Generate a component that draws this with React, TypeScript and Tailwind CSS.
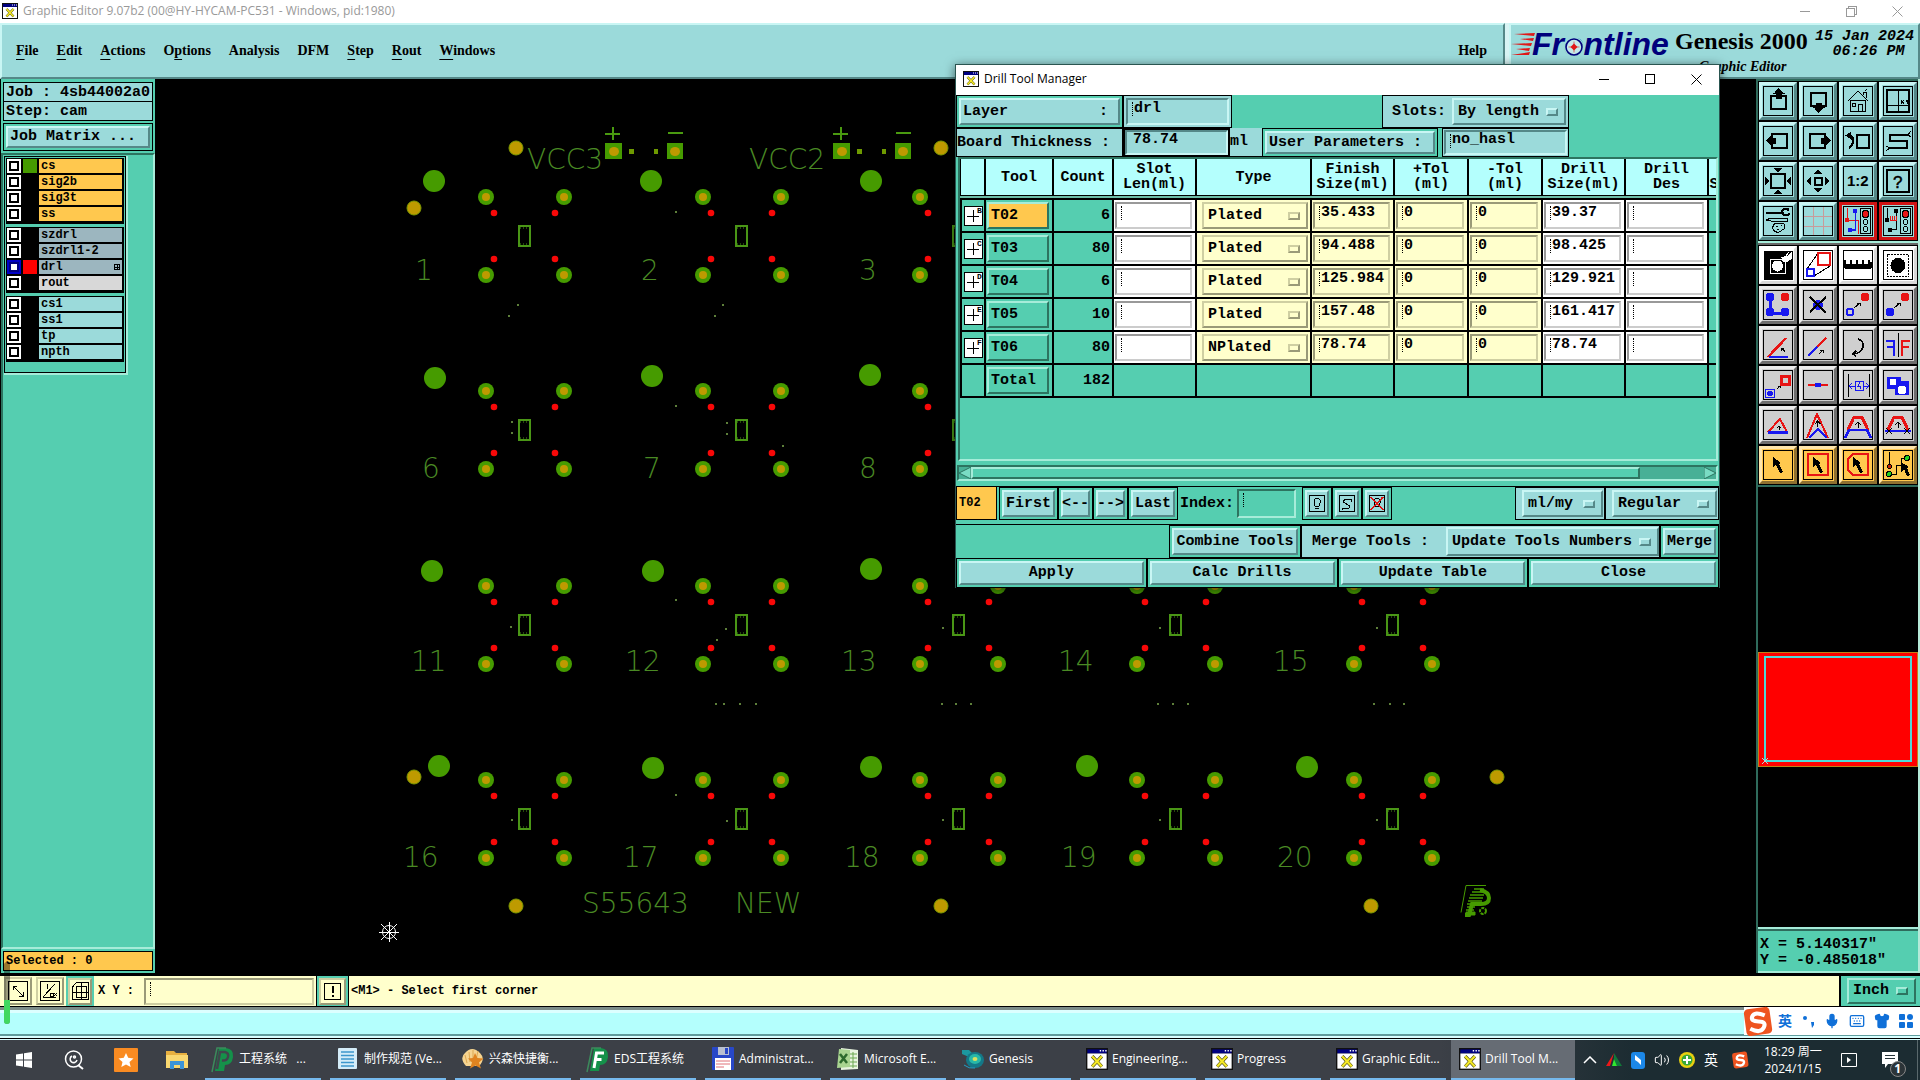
import React from 'react';
import { Mic, Keyboard, Shirt, Volume2 } from 'lucide-react';

const MONO = "font-['Liberation_Mono','Noto_Sans_CJK_SC',monospace] font-bold";
const SERIF = "font-['Liberation_Serif',serif]";
const UI = "font-['Open_Sans','Noto_Sans_CJK_SC',sans-serif]";

const RAISED = 'border-2 border-t-[#c9f6f4] border-l-[#c9f6f4] border-b-[#558888] border-r-[#558888]';
const SUNKEN = 'border-2 border-t-[#558888] border-l-[#558888] border-b-[#c9f6f4] border-r-[#c9f6f4]';
const RAISED_GREEN = 'border-2 border-t-[#a6ecd9] border-l-[#a6ecd9] border-b-[#2d7460] border-r-[#2d7460]';
const SUNKEN_GREEN = 'border-2 border-t-[#2d7460] border-l-[#2d7460] border-b-[#a6ecd9] border-r-[#a6ecd9]';
const RAISED_CREAM = 'border-2 border-t-[#cfcfa2] border-l-[#cfcfa2] border-b-[#9a9a78] border-r-[#9a9a78]';
const SUNKEN_CREAM = 'border-2 border-t-[#9a9a78] border-l-[#9a9a78] border-b-[#cfcfa2] border-r-[#cfcfa2]';
const SUNKEN_WHITE = 'border-2 border-t-[#999999] border-l-[#999999] border-b-[#cccccc] border-r-[#cccccc]';

/* ---------- small shared parts ---------- */

function XIcon({ size = 16 }: { size?: number }) {
  return (
    <svg width={size} height={size} viewBox="0 0 16 16" className="shrink-0">
      <rect x="0" y="0" width="16" height="16" fill="#111" />
      <rect x="1" y="1" width="14" height="3" fill="#000080" />
      <path d="M10 2h1M12 2h1M14 2h1" stroke="#fff" strokeWidth="1" />
      <rect x="1" y="4" width="14" height="11" fill="#fff" />
      <path d="M4.500 6l7 7.500M11.500 6l-7 7.500" stroke="#3c3c00" strokeWidth="2.400" />
      <path d="M4.500 6l7 7.500M11.500 6l-7 7.500" stroke="#f4e828" strokeWidth="1.700" />
    </svg>
  );
}

interface OptionMenuProps {
  label: string;
  value: string;
  className: string;
  mark: string;
}

function OptionMenu({ label, value, className, mark }: OptionMenuProps) {
  return (
    <span className={`relative flex items-center ${className}`}>
      <select aria-label={label} defaultValue={value} className="h-full w-full appearance-none bg-transparent pl-1 outline-none">
        <option>{value}</option>
      </select>
      <span className={`pointer-events-none absolute right-1.5 h-2 w-3 ${mark}`} />
    </span>
  );
}

interface FieldProps {
  label: string;
  value?: string;
  className: string;
  caret?: boolean;
}

function Field({ label, value = '', className, caret = true }: FieldProps) {
  return (
    <span className={`relative block ${className}`}>
      <input
        aria-label={label}
        defaultValue={value}
        className="block h-full w-full min-w-0 bg-transparent pb-1.5 pl-1.5 leading-4 outline-none"
      />
      {caret && <span className="pointer-events-none absolute left-1 top-0.5 h-3.5 border-l border-dotted border-black" />}
    </span>
  );
}

/* ---------- title and menu bars ---------- */

function WindowControls({ color, restore }: { color: string; restore?: boolean }) {
  return (
    <div className="flex">
      <button aria-label="Minimize" className="flex h-5 w-[46px] items-center justify-center">
        <svg width="11" height="11" shapeRendering="crispEdges"><path d="M0 5.500h10" stroke={color} /></svg>
      </button>
      <button aria-label="Maximize" className="flex h-5 w-[46px] items-center justify-center">
        <svg width="11" height="11" fill="none" stroke={color} shapeRendering="crispEdges">
          {restore ? <path d="M.5 2.500h8v8h-8zM2.500 2.500v-2h8v8h-2" /> : <path d="M.5.5h9v9h-9z" />}
        </svg>
      </button>
      <button aria-label="Close" className="flex h-5 w-[46px] items-center justify-center">
        <svg width="11" height="11" stroke={color}><path d="M.5.5l10 10M10.500.5l-10 10" /></svg>
      </button>
    </div>
  );
}

const menus = [
  ['', 'F', 'ile'],
  ['', 'E', 'dit'],
  ['', 'A', 'ctions'],
  ['O', 'p', 'tions'],
  ['Analysis', '', ''],
  ['DFM', '', ''],
  ['', 'S', 'tep'],
  ['', 'R', 'out'],
  ['', 'W', 'indows'],
];

function FrontlineLogo() {
  return (
    <svg width="164" height="40" viewBox="0 0 164 40" role="img" aria-label="Frontline">
      <g fill="#e01818">
        <path d="M3 9L24 8l-1 3zM9 14l14-1-1 3zM0 19l21-1-1 3zM5 24l14-1-1 3zM0 30l19-3-1 3z" />
      </g>
      <text x="21" y="30" fontSize="32" fontWeight="700" fontStyle="italic" fill="#00007c" fontFamily="Liberation Sans">
        Frontline
      </text>
      <circle cx="63" cy="22" r="10" fill="#9bdada" />
      <circle cx="63" cy="22" r="8" fill="#c4eaea" stroke="#00007c" strokeWidth="1.600" />
      <path d="M63 18.500l3.500 3.500-3.500 3.500-3.500-3.500z" fill="#e01818" />
      <path d="M63 16.500v11M57.500 22h11" stroke="#e01818" strokeWidth=".6" />
    </svg>
  );
}

function MenuBar() {
  return (
    <header className={`flex h-14 gap-1 bg-[#d8f4f4] ${SERIF}`}>
      <nav className={`flex flex-1 items-center justify-between bg-[#9bdada] pl-3.5 pr-4 text-sm font-bold ${RAISED} border-t-[#4f7f7f]`}>
        <div className="flex gap-[18px]">
          {menus.map(([pre, key, post]) => (
            <button key={pre + key + post}>
              {pre}
              <span className="underline underline-offset-4">{key}</span>
              {post}
            </button>
          ))}
        </div>
        <button>Help</button>
      </nav>
      <div className={`flex w-[411px] bg-[#9bdada] ${RAISED} border-t-[#4f7f7f]`}>
        <FrontlineLogo />
        <div className="flex-1 pt-1">
          <div className="text-2xl font-bold leading-6">Genesis 2000</div>
          <div className="pl-6 pt-1 text-sm font-bold italic leading-5">Graphic Editor</div>
        </div>
        <div className={`pr-1 pt-1 text-center text-[15px] italic leading-[15px] ${MONO}`}>
          <div>15 Jan 2024</div>
          <div className="pl-2">06:26 PM</div>
        </div>
      </div>
    </header>
  );
}

/* ---------- layer list ---------- */

interface Layer {
  name: string;
  color?: string;
  active?: boolean;
}

const layerGroups: { bg: string; layers: Layer[] }[] = [
  { bg: 'bg-[#ffc84e]', layers: [{ name: 'cs', color: 'bg-[#469b00]' }, { name: 'sig2b' }, { name: 'sig3t' }, { name: 'ss' }] },
  { bg: 'bg-[#9cb6bf]', layers: [{ name: 'szdrl' }, { name: 'szdrl1-2' }, { name: 'drl', color: 'bg-[#ff0000]', active: true }, { name: 'rout' }] },
  { bg: 'bg-[#9bdada]', layers: [{ name: 'cs1' }, { name: 'ss1' }, { name: 'tp' }, { name: 'npth' }] },
];

function LayerPanel() {
  return (
    <aside className={`flex w-[155px] shrink-0 flex-col border-l border-black bg-[#55ceb0] ${MONO}`}>
      <div className="flex flex-col gap-0.5 px-0.5 pt-[3px] text-[15px]">
        <div>
          <div className="h-5 border border-black bg-[#9bdada] pl-0.5 leading-5">Job : 4sb44002a0</div>
          <div className="h-[19px] border border-t-0 border-black bg-[#9bdada] pl-0.5 leading-5">Step: cam</div>
        </div>
        <div className="border border-black p-0.5">
          <button className={`block h-[22px] w-full bg-[#9bdada] pl-0.5 text-left leading-[18px] ${RAISED}`}>Job Matrix ...</button>
        </div>
      </div>
      <div className={`mt-0.5 flex-1 pl-px pt-px ${SUNKEN_GREEN}`}>
        <div className="w-[124px] border-b-2 border-r-2 border-[#a6ecd9]">
          <div className="flex flex-col gap-[3px] border border-black p-px pb-2.5 text-xs">
            {layerGroups.map((group) => (
              <div key={group.bg} className="flex flex-col gap-0.5 bg-black p-px pr-0.5 pb-[3px]">
                {group.layers.map((layer) => (
                  <div key={layer.name} className="flex h-3.5 gap-0.5">
                    <label className={`flex w-3.5 items-center justify-center ${layer.active ? 'bg-[#0000c8]' : 'bg-white'}`}>
                      <input
                        type="checkbox"
                        aria-label={layer.name}
                        className={`size-2.5 appearance-none border-2 bg-white ${layer.active ? 'border-[#000080]' : 'border-black'}`}
                      />
                    </label>
                    <span className={`w-3.5 ${layer.color ?? 'bg-black'}`} />
                    <button
                      className={`flex flex-1 items-center justify-between pl-0.5 leading-3 ${layer.name === 'rout' ? 'bg-[#d8d8d8]' : group.bg}`}
                    >
                      {layer.name}
                      {layer.active && (
                        <svg width="6" height="6" fill="none" stroke="#000" className="mr-0.5" shapeRendering="crispEdges">
                          <path d="M.5.5h5v5h-5zM3 0v6M0 3h6" />
                        </svg>
                      )}
                    </button>
                  </div>
                ))}
              </div>
            ))}
          </div>
        </div>
      </div>
      <div className="mx-0.5 my-0.5 h-5 border border-black bg-[#ffc84e] pl-0.5 text-xs leading-[18px]">Selected : 0</div>
    </aside>
  );
}

/* ---------- board drawing ---------- */

const colX = [486, 703, 920, 1137, 1354];
const rowY = [197, 391, 586, 780];

const fiducials = [
  [434, 181], [651, 181], [871, 181],
  [435, 378], [652, 376], [870, 375],
  [432, 571], [653, 571], [871, 569],
  [439, 766], [653, 768], [871, 767], [1087, 766], [1307, 767],
];

const drills = [
  [516, 148], [414, 208], [941, 148], [414, 777],
  [516, 906], [941, 906], [1371, 906], [1497, 777],
];

const labels: [string, number, number][] = [
  ['1', 415, 280], ['2', 641, 280], ['3', 859, 280],
  ['6', 422, 478], ['7', 643, 478], ['8', 859, 478],
  ['11', 411, 671], ['12', 625, 671], ['13', 841, 671], ['14', 1058, 671], ['15', 1273, 671],
  ['16', 403, 867], ['17', 623, 867], ['18', 844, 867], ['19', 1061, 867], ['20', 1277, 867],
  ['VCC3', 527, 169], ['VCC2', 749, 169], ['S55643', 582, 913], ['NEW', 735, 913],
];

const dots = [
  [518, 305], [509, 316], [723, 305], [715, 316], [676, 212], [676, 406],
  [512, 422], [512, 433], [727, 423], [727, 434], [783, 446], [676, 600],
  [511, 627], [726, 629], [943, 628], [1160, 628], [1377, 628], [717, 640],
  [512, 820], [727, 821], [943, 820], [1160, 820], [1377, 820], [676, 795],
  [716, 704], [724, 704], [740, 704], [756, 704], [942, 704], [956, 704], [971, 704],
  [1158, 704], [1173, 704], [1188, 704], [1374, 704], [1390, 704], [1404, 704],
];

function Connector({ x }: { x: number }) {
  return (
    <g>
      <path d={`M${x - 9} 134h15M${x - 1} 127v13M${x + 54} 133h15`} stroke="#4a9a10" strokeWidth="2" />
      <rect x={x - 9} y="143" width="17" height="16" fill="#469b00" />
      <rect x={x + 53} y="143" width="16" height="16" fill="#469b00" />
      <ellipse cx={x} cy="151.500" rx="5" ry="4.500" fill="#be9a00" />
      <ellipse cx={x + 61} cy="151.500" rx="5" ry="4.500" fill="#be9a00" />
      <rect x={x + 15} y="149" width="5" height="5" fill="#6e9a00" />
      <rect x={x + 40} y="149" width="4" height="5" fill="#6e9a00" />
    </g>
  );
}

function BoardView() {
  return (
    <main className="relative min-w-0 flex-1 overflow-hidden bg-black">
      <svg viewBox="155 79 1601 894" preserveAspectRatio="xMinYMin slice" className="absolute inset-0 h-full w-full">
        {rowY.map((y) =>
          colX.map((x) => (
            <g key={`${x}-${y}`}>
              {[[0, 0], [78, 0], [0, 78], [78, 78]].map(([dx, dy]) => (
                <g key={`${dx}-${dy}`}>
                  <circle cx={x + dx} cy={y + dy} r="8" fill="#469b00" />
                  <circle cx={x + dx} cy={y + dy} r="4" fill="#be9a00" />
                </g>
              ))}
              {[[8, 16], [69, 16], [8, 62], [69, 62]].map(([dx, dy]) => (
                <circle key={`${dx}-${dy}`} cx={x + dx} cy={y + dy} r="3.300" fill="#f80808" />
              ))}
              <rect x={x + 33} y={y + 29} width="11" height="20" fill="none" stroke="#4a9616" strokeWidth="2" />
              <path d={`M${x + 34} ${y + 31}h9M${x + 34} ${y + 47}h9`} stroke="#4a9616" strokeDasharray="1 2" />
            </g>
          ))
        )}
        {fiducials.map(([x, y]) => (
          <circle key={`${x}-${y}`} cx={x} cy={y} r="11" fill="#469b00" />
        ))}
        {drills.map(([x, y]) => (
          <circle key={`${x}-${y}`} cx={x} cy={y} r="7" fill="#be9a00" stroke="#7c9a00" strokeWidth="1" />
        ))}
        <Connector x={614} />
        <Connector x={842} />
        {labels.map(([text, x, y]) => (
          <text key={text} x={x} y={y} fontSize="28" fontWeight="200" fontFamily="'DejaVu Sans Light', 'DejaVu Sans', sans-serif" fill="#4a8a24">
            {text}
          </text>
        ))}
        {dots.map(([x, y]) => (
          <rect key={`${x}-${y}`} x={x - 1} y={y - 1} width="2" height="2" fill="#5d7f3a" />
        ))}
        {/* origin marker */}
        <g stroke="#fff" fill="none">
          <circle cx="389" cy="932" r="6.500" />
          <path d="M379 932.500h20M389.500 922v20M381 924l16 16M397 924l-16 16" />
        </g>
        {/* maker's mark */}
        <g fill="none" stroke="#469b00">
          <path d="M1486 885.500h-20l-5 27" />
          <path d="M1474 889h10M1472 892h14M1470 895h14M1469 898h14M1468 901h14M1467 904h10M1467 907h8M1466 910h8" strokeWidth="1.600" />
          <path d="M1480 890q9 2 9 8t-8 6h-9l-3 11h-4" strokeWidth="4" />
          <path d="M1466 912h9v3h-9z" fill="#469b00" />
          <circle cx="1483" cy="911" r="3" strokeDasharray="3 1" strokeWidth="2" />
        </g>
      </svg>
    </main>
  );
}

/* ---------- right tool box ---------- */

const R = '#e81414';
const B = '#1818f0';

const viewTools: [string, React.ReactNode][] = [
  ['Pan up', <g><path d="M8 9.500h15v13H8z" fill="none" strokeWidth="2" /><path d="M15.500 2l4 4v1h2v1h-3v5h-6V8h-3V7h2V6z" fill="#000" stroke="none" /></g>],
  ['Pan down', <g><path d="M8 7h15v13H8z" fill="none" strokeWidth="2" /><path d="M15.500 27l-4-4v-1h-2v-1h3v-4h6v4h3v1h-2v1z" fill="#000" stroke="none" /></g>],
  ['Home', <g fill="none"><path d="M7.500 14.500h15v11h-15zM5 15l10-10 10 10M9.500 17.500h3v3h-3zM15.500 25v-7h4v7M20.500 9V6h3v6M22 5l2-2" /></g>],
  ['Window XY', <g fill="none"><path d="M4 4h22v22H4z" strokeWidth="2" /><path d="M15.500 4v22M4 19.500h22" /><path d="M18 14l3 4M21 14l-3 4M23 14l1 2 1-2M24 16v2" /></g>],
  ['Pan left', <g><path d="M9 8h15v14H9z" fill="none" strokeWidth="2" /><path d="M2.500 14.500l5-5v2h5v6h-5v2z" fill="#000" stroke="none" /></g>],
  ['Pan right', <g><path d="M7 8h15v14H7z" fill="none" strokeWidth="2" /><path d="M27.500 14.500l-5-5v2h-5v6h5v2z" fill="#000" stroke="none" /></g>],
  ['Previous view', <g fill="none"><path d="M14 9h12v13H14z" strokeWidth="2" /><path d="M5 9h2q3 2 3 6t-4 7" strokeWidth="2.500" /><path d="M2 9.500l6-4v8z" fill="#000" stroke="none" /></g>],
  ['Serpent', <g fill="none"><path d="M25 9H7v6h17v7H7" strokeWidth="2" /><path d="M25 9l3-4M25 9l3 2M7 22l-4 3M7 22l-4-2" /></g>],
  ['Zoom in', <g><path d="M8 8h14v14H8z" fill="none" strokeWidth="2" /><path d="M10 2h10l-5 4zM10 28h10l-5-4zM2 10v10l4-5zM28 10v10l-4-5z" fill="#000" stroke="none" /></g>],
  ['Zoom out', <g><path d="M11.500 11.500h7v7h-7z" fill="none" strokeWidth="2" /><path d="M10 8h10l-5-4zM10 22h10l-5 4zM8 10v10l-4-5zM22 10v10l4-5z" fill="#000" stroke="none" /></g>],
  ['Scale 1:2', <text x="4" y="20" fontSize="15" fontWeight="700" fontFamily="Liberation Sans" stroke="none">1:2</text>],
  ['Query', <g><path d="M4 4h22v22H4z" fill="none" strokeWidth="2" /><text x="10" y="22" fontSize="17" fontFamily="Liberation Sans" strokeWidth=".5">?</text></g>],
  ['Settings', <g fill="none"><path d="M3 6.500h17" strokeWidth="2" /><path d="M26 4q-6-3-7 2 1 5 8 2" strokeWidth="2.500" /><path d="M3 14l5-2h16v3H8z" /><path d="M13 17q-4 2-3 6 2 4 6 3l5-3q2-4-1-6zM13 20h2M18 19h1M14 23h2" /></g>],
  ['Grid', <path d="M10.500 1v28M20.500 1v28M1 10.500h28M1 20.500h28" stroke="#c99a9a" />],
];

const trafficTools: [string, React.ReactNode][] = [
  ['Net check', <g fill="none"><path d="M4.500 2v12M3 14h12v14" stroke={R} /><path d="M12.500 3v21H6" stroke={B} strokeWidth="1.500" /><circle cx="4" cy="14" r="2.500" fill={R} stroke="none" /><circle cx="12" cy="5" r="2.500" fill={B} stroke="none" /><circle cx="7" cy="24" r="2.500" fill={B} stroke="none" /></g>],
  ['Short check', <g fill="none"><path d="M4.500 2v12M13.500 4v19H7" /><path d="M7 10v4h6v-4M9 10v4M11 10v4" stroke={R} /><circle cx="4" cy="14" r="2" fill="#000" /><circle cx="13" cy="5" r="2" fill="#000" /><circle cx="7" cy="24" r="2" fill="#000" /></g>],
];

const whiteTools: [string, React.ReactNode][] = [
  ['Zoom', <g><path d="M1 1h28v28H1z" fill="#000" /><path d="M7 9h15v14H7zM20 10l6-8" fill="none" stroke="#fff" strokeWidth="1" /><circle cx="14.500" cy="16" r="5.500" fill="#fff" stroke="none" /><path d="M18 7l6-1 5-5v8l-5 3-4 0z" fill="#fff" stroke="none" /></g>],
  ['Resize', <g fill="none"><path d="M4 19L15 3M11 26l16-10" /><path d="M15 3h12v12H15z" stroke={R} strokeWidth="2" /><path d="M4 19h7v7H4z" stroke={B} strokeWidth="2" /></g>],
  ['Measure', <path d="M2 18h26M2 10v8M4 14v4M6 14v4M8 10v8M10 14v4M12 14v4M14 10v8M16 14v4M18 14v4M20 10v8M22 14v4M24 14v4M26 10v8M28 12v6" strokeWidth="1.500" />],
  ['Select feature', <g><path d="M4.500 4.500h21v22h-21z" fill="none" strokeDasharray="2 1" /><circle cx="15" cy="15.500" r="7" fill="#000" /></g>],
];

const editTools: [string, React.ReactNode][] = [
  ['Move', <g><path d="M7 7v16h15" fill="none" stroke={B} strokeWidth="3" /><circle cx="7" cy="7" r="4.500" fill={B} stroke="none" /><circle cx="7" cy="22" r="4.500" fill={B} stroke="none" /><circle cx="22" cy="22" r="4.500" fill={B} stroke="none" /><circle cx="22" cy="7" r="4.500" fill={R} stroke="none" /></g>],
  ['Delete', <g><circle cx="15" cy="15" r="5" fill={B} stroke="none" /><path d="M7 7l16 16M23 7L7 22" strokeWidth="2" /></g>],
  ['Copy', <g><circle cx="7" cy="22" r="3.500" fill="none" stroke={B} strokeWidth="2" /><circle cx="22" cy="7" r="4.500" fill={R} stroke="none" /><path d="M11 18l6-5M14 13h3v3" fill="none" /></g>],
  ['Move to', <g><circle cx="7" cy="22" r="4.500" fill={B} stroke="none" /><circle cx="22" cy="7" r="4.500" fill={R} stroke="none" /><path d="M11 18l6-5M14 13h3v3" fill="none" /></g>],
  ['Rotate line', <g fill="none"><path d="M5 27L23 8" stroke={R} strokeWidth="2.500" /><path d="M6 27h19" stroke={B} strokeWidth="2.500" /><path d="M22 22l-3-4M18 21v-3h3" /></g>],
  ['Stretch', <g fill="none"><path d="M14 17l9-9" stroke={R} strokeWidth="2.500" /><path d="M5 26l9-9" stroke={B} strokeWidth="2.500" /><path d="M16 24l4-4M17 20h3v3" /></g>],
  ['Rotate', <path d="M15 9q6 2 5 8-2 6-9 7M13 21l-3 3 3 2" fill="none" strokeWidth="1.500" />],
  ['Mirror', <g fill="none"><path d="M15.500 3v24" /><path d="M3 11h8v15M4 17h7" stroke={B} strokeWidth="2.500" /><path d="M27 11h-8v15M26 17h-7" stroke={R} strokeWidth="2.500" /></g>],
  ['Copy feature', <g fill="none"><path d="M18 6h8v8h-8z" stroke={R} strokeWidth="3" /><path d="M2.500 19.500h9v8h-9z" stroke={B} /><circle cx="7" cy="23.500" r="3" fill={B} stroke="none" /><path d="M14 19l3-3M15 16h2v2" /></g>],
  ['Join', <g><path d="M5 15h20" stroke={R} strokeWidth="2.500" /><path d="M12 15h6" stroke={B} strokeWidth="3.500" /></g>],
  ['Space', <g fill="none"><path d="M5.500 4v23M26.500 4v23" /><path d="M6 16h6M20 16h6M9 13l-3 3 3 3M23 13l3 3-3 3M12 11h8v9h-8zM17 12l-2 4h3l-1 3" stroke={B} /></g>],
  ['Merge shapes', <g><path d="M4 7h14v4h8v14H12v-6H4z" fill={B} stroke="none" /><circle cx="10" cy="12" r="3.500" fill="#fff" stroke="none" /><circle cx="19" cy="20" r="4.500" fill="#fff" stroke="none" /></g>],
  ['Chamfer', <g fill="none"><path d="M5 22L17 9l7 13" stroke={R} strokeWidth="2" /><path d="M5 22.500h20" stroke={B} strokeWidth="2.500" /><path d="M16 20v-4M14 18l2-2 2 2" /></g>],
  ['Peak', <g fill="none"><path d="M4 28L14 4l11 24" stroke={R} strokeWidth="2" /><path d="M6 28l9-9 9 9" stroke={B} strokeWidth="2" /><path d="M14.500 17v-6M12 14l2.500-3 3 3" /></g>],
  ['Offset', <g fill="none"><path d="M5 20L11 7h8l6 13" stroke={R} strokeWidth="3" /><path d="M2 28l4-8h18l4 8" stroke={B} strokeWidth="2.500" /><path d="M15 18v-6M12 15l3-3 3 3" /></g>],
  ['Trim', <g fill="none"><path d="M5 20L11 7h8l6 13" stroke={R} strokeWidth="3" /><path d="M2 21h26" stroke={B} strokeWidth="2.500" /><path d="M15 18v-6M12 15l3-3 3 3M3 18l6 6M9 18l-6 6M21 18l6 6M27 18l-6 6" /></g>],
];

const pointer = 'M10 7l8 6-2 1 4 8-3 1-4-8-3 2z';

const selectTools: [string, React.ReactNode][] = [
  ['Select', <path d={pointer} fill="#000" stroke="none" />],
  ['Select in box', <g><path d="M5 4h20v21H5z" fill="none" stroke={R} strokeWidth="2" /><path d={pointer} fill="#000" stroke="none" /></g>],
  ['Select in polygon', <g><path d="M10 4h15v21H10l-5-5V9z" fill="none" stroke={R} strokeWidth="2" /><path d={pointer} fill="#000" stroke="none" /></g>],
  ['Select net', <g fill="none"><path d="M6.500 2v14M6 24h7v-9h5V8h5" /><circle cx="6.500" cy="16.500" r="2" fill="#c02000" /><circle cx="24" cy="8" r="2.500" fill="#20d020" /><circle cx="6" cy="24" r="2.500" fill="#20d020" /><path d="M18 12l8 5-2 1 3 7-3 1-3-7-3 3z" fill="#000" stroke="none" /></g>],
];

interface ToolButtonProps {
  name: string;
  tone: string;
  framed?: boolean;
  children: React.ReactNode;
}

function ToolButton({ name, tone, framed = true, children }: ToolButtonProps) {
  return (
    <button aria-label={name} className={`flex size-[38px] items-center justify-center border-[3px] ${tone}`}>
      <svg width="30" height="30" viewBox="0 0 30 30" stroke="#000" shapeRendering="crispEdges">
        {framed && <rect x=".5" y=".5" width="29" height="29" fill="none" />}
        {children}
      </svg>
    </button>
  );
}

const TONE_AQUA = 'bg-[#9bdada] border-t-[#c9f6f4] border-l-[#c9f6f4] border-b-[#558888] border-r-[#558888]';
const TONE_RED = 'bg-[#9bdada] border-[#d01414]';
const TONE_WHITE = 'bg-white border-t-white border-l-white border-b-[#d8d8d8] border-r-[#d8d8d8]';
const TONE_GRAY = 'bg-[#cfcfcf] border-t-[#ececec] border-l-[#ececec] border-b-[#6e6e6e] border-r-[#6e6e6e]';
const TONE_AMBER = 'bg-[#ffc84e] border-t-[#ffe6ac] border-l-[#ffe6ac] border-b-[#8f7030] border-r-[#8f7030]';

function ToolPanel() {
  return (
    <aside className="flex w-[164px] shrink-0 flex-col border-l-2 border-r-2 border-l-[#2f6b5c] border-r-[#b5ead9] bg-black">
      <div className="border-t-2 border-[#2f6b5c] p-px">
        <div className="grid grid-cols-4 gap-0.5">
          {viewTools.map(([name, icon]) => (
            <ToolButton key={name} name={name} tone={TONE_AQUA}>{icon}</ToolButton>
          ))}
          {trafficTools.map(([name, icon]) => (
            <ToolButton key={name} name={name} tone={TONE_RED}>
              {icon}
              <path d="M17.500 2.500h10v25h-10z" fill="none" />
              <circle cx="22.500" cy="8" r="3.500" fill={R} />
              <circle cx="22.500" cy="16" r="2.500" fill="none" />
              <circle cx="22.500" cy="23" r="2.500" fill="none" />
            </ToolButton>
          ))}
        </div>
      </div>
      <div className="border-b-2 border-t-2 border-b-[#666] border-t-[#a6ecd9] bg-black" />
      <div className="p-px">
        <div className="grid grid-cols-4 gap-0.5">
          {whiteTools.map(([name, icon]) => (
            <ToolButton key={name} name={name} tone={TONE_WHITE} framed={name !== 'Zoom'}>{icon}</ToolButton>
          ))}
          {editTools.map(([name, icon]) => (
            <ToolButton key={name} name={name} tone={TONE_GRAY}>{icon}</ToolButton>
          ))}
          {selectTools.map(([name, icon]) => (
            <ToolButton key={name} name={name} tone={TONE_AMBER}>{icon}</ToolButton>
          ))}
        </div>
      </div>
      <div className="border-t-2 border-[#2f6b5c]" />
      <div className="flex flex-1 items-center pt-1.5">
        {/* overview map */}
        <svg viewBox="0 0 160 116" className="w-full">
          <rect x=".5" y=".5" width="159" height="114" fill="#ff0000" stroke="#c08018" />
          <rect x="7" y="5" width="146" height="104" fill="none" stroke="#50d8d8" strokeWidth="2" />
          <path d="M4 106l6 6M10 106l-6 6" stroke="#b0d8d8" />
        </svg>
      </div>
      <div className="border-b-2 border-t-2 border-[#a6ecd9] bg-[#55ceb0]">
        <div className={`border-t-2 border-[#2f6b5c] pb-0.5 pl-0.5 pt-1.5 text-[15px] leading-4 ${MONO}`}>
          <div>X = 5.140317"</div>
          <div>Y = -0.485018"</div>
        </div>
      </div>
    </aside>
  );
}

/* ---------- prompt line ---------- */

function PromptBar() {
  return (
    <section className={`flex h-[37px] shrink-0 border-b-[3px] border-t-[3px] border-b-[#7c8c88] border-t-black bg-[#ffffcc] text-xs ${MONO}`}>
      <div className="flex flex-1 items-center border-b border-black">
        <button aria-label="Snap" className={`ml-1 flex h-7 w-7 items-center justify-center ${RAISED_CREAM}`}>
          <svg width="20" height="20" fill="none" stroke="#000" shapeRendering="crispEdges"><path d="M.5.5h19v19H.5zM5 5l10 10M5 9V5h4M15 11v4h-4" /></svg>
        </button>
        <button aria-label="Angle" className={`ml-1 flex h-7 w-7 items-center justify-center ${RAISED_CREAM}`}>
          <svg width="20" height="20" fill="none" stroke="#000" shapeRendering="crispEdges"><path d="M.5.5h19v19H.5zM3 16L15 3M3 16h13M7 3v5M10 12h3v3h-3zM14 12l3 3M17 12l-3 3" /></svg>
        </button>
        <span className="ml-0.5 flex h-full items-center bg-[#55ceb0] px-0.5">
          <button aria-label="Grid" className={`flex h-[27px] w-6 items-center justify-center bg-[#ffffcc] ${RAISED_CREAM}`}>
            <svg width="17" height="18" fill="none" stroke="#000" shapeRendering="crispEdges"><path d="M.5 5l4-4.500h12v17H.5zM4 4h10v11H4zM9 1v16M1 10h15" /></svg>
          </button>
        </span>
        <label htmlFor="xy" className="w-[50px] pl-1">X Y :</label>
        <span className={`relative h-[27px] w-[170px] ${SUNKEN_CREAM}`}>
          <input id="xy" className="h-full w-full bg-transparent pl-1.5 outline-none" />
          <span className="pointer-events-none absolute left-1 top-0.5 h-3.5 border-l border-dotted border-black" />
        </span>
        <span className="ml-0.5 flex h-full items-center border-x border-black bg-[#55ceb0] px-0.5">
          <button aria-label="Options" className={`flex h-[27px] w-[27px] items-center justify-center bg-[#ffffcc] ${RAISED_CREAM}`}>
            <svg width="17" height="17" fill="none" stroke="#000" shapeRendering="crispEdges"><path d="M.5.5h16v16H.5z" /><path d="M8.500 3v7M8.500 12v2" strokeWidth="2" /></svg>
          </button>
        </span>
        <span className="pl-0.5">&lt;M1&gt; - Select first corner</span>
      </div>
      <div className="w-[81px] border-b border-l-2 border-black bg-[#55ceb0] py-0.5 pl-1.5 pr-1 text-[15px]">
        <OptionMenu label="Units" value="Inch" className={`h-full ${RAISED_GREEN}`} mark={`${RAISED_GREEN}`} />
      </div>
    </section>
  );
}

/* ---------- input method bar ---------- */

function SogouLogo({ size }: { size: number }) {
  return (
    <svg width={size} height={size} viewBox="0 0 30 30" className="shrink-0">
      <rect x="3" y="2" width="25" height="26" rx="4" fill="#ee5420" transform="rotate(-8 15 15)" />
      <path d="M22 9Q12 5 10 10t6 5 5 6-13 1" fill="none" stroke="#fff" strokeWidth="4" />
    </svg>
  );
}

function InputMethodBar() {
  return (
    <div className="absolute bottom-[5px] right-0 flex h-7 w-[176px] items-center gap-[9px] bg-white text-[#1070d8]">
      <span className="-ml-0.5">
        <SogouLogo size={31} />
      </span>
      <span className={`-ml-1 text-sm font-bold ${UI}`}>英</span>
      <svg width="14" height="14" className="shrink-0"><circle cx="4" cy="4" r="2" fill="#1070d8" /><path d="M10 8h3v3l-2 3" fill="#1070d8" /></svg>
      <Mic className="size-4 shrink-0" fill="#1070d8" />
      <Keyboard className="size-4 shrink-0" />
      <Shirt className="size-4 shrink-0" fill="#1070d8" />
      <svg width="14" height="14" className="shrink-0" fill="#1070d8"><rect width="6" height="6" rx="1" /><circle cx="11" cy="3" r="3" /><rect y="8" width="6" height="6" rx="1" /><rect x="8" y="8" width="6" height="6" rx="1" /></svg>
    </div>
  );
}

/* ---------- drill tool dialog ---------- */

interface DrillTool {
  id: string;
  symbol: string;
  count: number;
  type: string;
  finish: string;
  drill: string;
}

const tools: DrillTool[] = [
  { id: 'T02', symbol: 'B', count: 6, type: 'Plated', finish: '35.433', drill: '39.37' },
  { id: 'T03', symbol: 'C', count: 80, type: 'Plated', finish: '94.488', drill: '98.425' },
  { id: 'T04', symbol: 'D', count: 6, type: 'Plated', finish: '125.984', drill: '129.921' },
  { id: 'T05', symbol: 'E', count: 10, type: 'Plated', finish: '157.48', drill: '161.417' },
  { id: 'T06', symbol: 'F', count: 80, type: 'NPlated', finish: '78.74', drill: '78.74' },
];

const columns = [
  { head: '', width: 'w-[26px]' },
  { head: 'Tool', width: 'w-[68px]' },
  { head: 'Count', width: 'w-[60px]' },
  { head: 'Slot\nLen(ml)', width: 'w-[83px]' },
  { head: 'Type', width: 'w-[115px]' },
  { head: 'Finish\nSize(ml)', width: 'w-[83px]' },
  { head: '+Tol\n(ml)', width: 'w-[74px]' },
  { head: '-Tol\n(ml)', width: 'w-[74px]' },
  { head: 'Drill\nSize(ml)', width: 'w-[83px]' },
  { head: 'Drill\nDes', width: 'w-[83px]' },
  { head: '\nS', width: 'w-3' },
];

const TD = 'h-[33px] border-b-2 border-r-2 border-black p-0';

function DrillTable() {
  return (
    <div className={`h-[304px] overflow-hidden ${SUNKEN_GREEN}`}>
      <table className="w-[761px] table-fixed border-separate border-spacing-0">
        <thead>
          <tr>
            {columns.map((c, i) => (
              <th key={c.head + i} className={`h-[37px] whitespace-pre border-b border-r-2 border-black bg-[#b4fffd] p-0 text-center leading-[15px] first:border-l ${c.width}`}>
                {c.head}
              </th>
            ))}
          </tr>
          <tr aria-hidden="true">
            <td colSpan={11} className="h-1 border-b-2 border-black bg-[#6dbfa9] p-0" />
          </tr>
        </thead>
        <tbody>
          {tools.map((t) => (
            <tr key={t.id}>
              <td className={`${TD} border-l-2`}>
                <svg width="19" height="20" className="mx-auto" shapeRendering="crispEdges" fill="none" stroke="#000">
                  <rect x=".5" y=".5" width="18" height="19" fill="#fff" />
                  <path d="M3 10h12M9.500 4v12" />
                  <text x="13" y="7" fontSize="8" stroke="none" fill="#000" fontFamily="Liberation Mono">{t.symbol}</text>
                </svg>
              </td>
              <td className={TD}>
                <button className={`ml-px block h-[27px] w-[62px] pl-0.5 text-left ${RAISED_GREEN} ${t.id === 'T02' ? 'bg-[#ffc84e]' : ''}`}>{t.id}</button>
              </td>
              <td className={`${TD} pr-0.5 text-right`}>{t.count}</td>
              <td className={`${TD} bg-white`}>
                <Field label={`${t.id} slot length`} className={`ml-px mr-[3px] h-[27px] ${SUNKEN_WHITE}`} />
              </td>
              <td className={`${TD} bg-[#ffffcc]`}>
                <OptionMenu label={`${t.id} type`} value={t.type} className={`ml-[5px] mr-0.5 h-[27px] ${RAISED_CREAM}`} mark={RAISED_CREAM} />
              </td>
              <td className={`${TD} bg-[#ffffcc]`}>
                <Field label={`${t.id} finish size`} value={t.finish} className={`ml-px mr-[3px] h-[27px] ${SUNKEN_CREAM}`} />
              </td>
              <td className={`${TD} bg-[#ffffcc]`}>
                <Field label={`${t.id} plus tolerance`} value="0" className={`ml-px mr-[3px] h-[27px] ${SUNKEN_CREAM}`} />
              </td>
              <td className={`${TD} bg-[#ffffcc]`}>
                <Field label={`${t.id} minus tolerance`} value="0" className={`ml-px mr-[3px] h-[27px] ${SUNKEN_CREAM}`} />
              </td>
              <td className={`${TD} bg-white`}>
                <Field label={`${t.id} drill size`} value={t.drill} className={`ml-px mr-[3px] h-[27px] ${SUNKEN_WHITE}`} />
              </td>
              <td className={`${TD} bg-white`}>
                <Field label={`${t.id} drill designator`} className={`ml-px mr-[3px] h-[27px] ${SUNKEN_WHITE}`} />
              </td>
              <td className={TD} />
            </tr>
          ))}
          <tr>
            <td className={`${TD} border-l-2`} />
            <td className={TD}>
              <div className={`ml-px h-[27px] w-[62px] pl-0.5 leading-[23px] ${RAISED_GREEN}`}>Total</div>
            </td>
            <td className={`${TD} pr-0.5 text-right`}>182</td>
            {columns.slice(3).map((c, i) => (
              <td key={i} className={TD} />
            ))}
          </tr>
        </tbody>
      </table>
    </div>
  );
}

function ActionButton({ children, className = '', label }: { children: React.ReactNode; className?: string; label?: string }) {
  return (
    <div className={`border border-black bg-[#55ceb0] p-0.5 ${className}`}>
      <button aria-label={label} className={`flex h-full w-full items-center justify-center whitespace-nowrap bg-[#9bdada] ${RAISED}`}>
        {children}
      </button>
    </div>
  );
}

function DrillToolManager() {
  return (
    <section className={`absolute left-[955px] top-16 w-[765px] border border-[#2a5550] bg-[#55ceb0] pb-px text-[15px] leading-5 shadow-[0_2px_10px_rgba(0,0,0,0.6)] ${MONO}`}>
      <div className={`flex h-[30px] items-center bg-white pb-0.5 pl-[7px] text-xs font-normal ${UI}`}>
        <XIcon />
        <h2 className="flex-1 pl-[5px]">Drill Tool Manager</h2>
        <WindowControls color="#000" />
      </div>

      <div className="flex h-[33px] items-stretch">
        <div className="w-[167px] border border-black p-0.5">
          <button className={`flex h-full w-full items-center justify-between bg-[#9bdada] pl-0.5 pr-2.5 ${RAISED}`}>
            <span>Layer</span>
            <span>:</span>
          </button>
        </div>
        <div className="w-[109px] border border-black bg-[#9bdada] p-0.5">
          <Field label="Layer" value="drl" className={`h-full ${SUNKEN}`} />
        </div>
        <div className="ml-[150px] flex w-[187px] items-center border border-black bg-[#9bdada] pl-[9px]">
          <span className="flex-1">Slots:</span>
          <OptionMenu label="Slots" value="By length" className={`my-0.5 mr-0.5 h-[27px] w-[114px] ${RAISED}`} mark={RAISED} />
        </div>
      </div>

      <div className="flex h-[29px] items-stretch">
        <div className="flex w-[167px] items-center border border-black bg-[#9bdada]">Board Thickness :</div>
        <div className="w-[107px] border-2 border-black bg-[#9bdada]">
          <Field label="Board thickness" value="78.74" className={`h-full ${SUNKEN}`} caret={false} />
        </div>
        <div className="flex w-8 items-center border-b border-black bg-[#9bdada]">ml</div>
        <div className="w-[176px] border border-black p-0.5">
          <button className={`h-full w-full bg-[#9bdada] pl-0.5 text-left leading-5 ${RAISED}`}>User Parameters :</button>
        </div>
        <div className="ml-1 w-[127px] border border-black bg-[#9bdada] p-px">
          <Field label="User parameters" value="no_hasl" className={`h-full ${SUNKEN}`} />
        </div>
      </div>

      <div className="pl-0.5 pr-px">
        <DrillTable />
      </div>

      <div className={`mx-px mb-[5px] mt-1 flex h-4 items-stretch bg-[#48b096] ${SUNKEN_GREEN}`}>
        <button aria-label="Scroll left" className="w-3">
          <svg width="12" height="12"><path d="M0 6L12 0v12z" fill="#7adcc4" stroke="#2d7460" /></svg>
        </button>
        <div className={`flex-1 bg-[#55ceb0] ${RAISED_GREEN}`} />
        <div className="w-[64px]" />
        <button aria-label="Scroll right" className="w-3">
          <svg width="12" height="12"><path d="M12 6L0 0v12z" fill="#7adcc4" stroke="#2d7460" /></svg>
        </button>
      </div>

      <div className="flex h-[34px] items-stretch border-t border-black">
        <div className="mr-0.5 flex w-[41px] items-center border border-t-0 border-black bg-[#ffc84e] pl-0.5 text-xs">T02</div>
        <ActionButton className="w-[59px]">First</ActionButton>
        <ActionButton className="w-[35px]">&lt;--</ActionButton>
        <ActionButton className="w-[35px]">--&gt;</ActionButton>
        <ActionButton className="w-[50px]">Last</ActionButton>
        <label htmlFor="tool-index" className="flex w-[59px] items-center pl-0.5">Index:</label>
        <span className={`relative my-0.5 mr-1.5 w-[59px] ${SUNKEN_GREEN}`}>
          <input id="tool-index" className="h-full w-full bg-transparent pl-1.5 outline-none" />
          <span className="pointer-events-none absolute left-1 top-0.5 h-3.5 border-l border-dotted border-black" />
        </span>
        <ActionButton className="w-[30px]" label="Highlight">
          <svg width="16" height="17" fill="none" stroke="#000" shapeRendering="crispEdges"><path d="M.5.5h15v16H.5zM6 11L5 8V5l2-2h2l2 2v3l-1 3zM6 13h4" /></svg>
        </ActionButton>
        <ActionButton className="w-[30px]" label="Snake">
          <svg width="16" height="17" fill="none" stroke="#000" shapeRendering="crispEdges"><path d="M.5.5h15v16H.5zM12 4H6l-2 3 7 4-1 2H4l-1 2M12 4l1 3" /></svg>
        </ActionButton>
        <ActionButton className="w-[30px]" label="Clear">
          <svg width="16" height="17" fill="none" stroke="#000" shapeRendering="crispEdges"><path d="M.5.5h15v16H.5zM6 11L5 8V5l2-2h2l2 2v3l-1 3z" /><path d="M2 2l12 13M14 2L2 15" stroke="#e01010" strokeWidth="1.500" /></svg>
        </ActionButton>
        <div className="flex-1" />
        <div className="w-[90px] border border-black bg-[#9bdada] py-0.5 pl-1.5 pr-px">
          <OptionMenu label="Units" value="ml/my" className={`h-full ${RAISED}`} mark={RAISED} />
        </div>
        <div className="w-[114px] border border-black bg-[#9bdada] py-0.5 pl-1.5 pr-px">
          <OptionMenu label="Mode" value="Regular" className={`h-full ${RAISED}`} mark={RAISED} />
        </div>
      </div>

      <div className="mt-1 flex h-[34px] items-stretch border-t border-black">
        <div className="flex-1" />
        <ActionButton className="w-[132px]">Combine Tools</ActionButton>
        <div className="flex w-[359px] items-center border border-black bg-[#9bdada] pl-2.5">
          <span className="flex-1">Merge Tools :</span>
          <OptionMenu label="Merge tools" value="Update Tools Numbers" className={`my-0.5 h-[29px] w-[213px] ${RAISED}`} mark={RAISED} />
        </div>
        <ActionButton className="w-[59px]">Merge</ActionButton>
      </div>

      <div className="grid h-7 grid-cols-4">
        <ActionButton>Apply</ActionButton>
        <ActionButton>Calc Drills</ActionButton>
        <ActionButton>Update Table</ActionButton>
        <ActionButton>Close</ActionButton>
      </div>
    </section>
  );
}

/* ---------- task bar ---------- */

function LetterIcon({ letter }: { letter: 'P' | 'F' }) {
  return (
    <svg width="24" height="28" viewBox="0 0 24 28" className="shrink-0">
      <path d="M8 3h7q8 1 7 9-1 8-8 8l-1 6H4z" fill="#15914a" />
      <path d="M1 27L6 3h9" fill="none" stroke="#3c8a5c" strokeWidth="1.500" />
      {letter === 'P' ? (
        <path d="M6 24l3-17h5q4 1 3 5t-6 3.500" fill="none" stroke="#40454c" strokeWidth="2.500" />
      ) : (
        <path d="M8 23l2.500-15H18M9.500 14.500h6" fill="none" stroke="#fff" strokeWidth="3" />
      )}
    </svg>
  );
}

const tasks: { title: string; icon: React.ReactNode; active?: boolean }[] = [
  { title: '工程系统   ...', icon: <LetterIcon letter="P" /> },
  {
    title: '制作规范 (Ve...',
    icon: (
      <svg width="20" height="22" className="mx-0.5 shrink-0"><rect width="19" height="21" rx="1" fill="#d4ecf8" /><path d="M3 4h13M3 7.500h13M3 11h13M3 14.500h13M3 18h13" stroke="#3c96cc" strokeWidth="1.500" /></svg>
    ),
  },
  {
    title: '兴森快捷衡...',
    icon: (
      <svg width="24" height="22" className="shrink-0"><path d="M5 18Q-2 10 4 5q7-8 15 0 6 6-1 13z" fill="#f6d490" /><path d="M6 15L4 7M9 14L8 4M12 13V2M15 12l2-9" stroke="#dca850" /><path d="M14 5l2.500 5 6 .5-4.500 4 2 6-5.500-3-5.500 3 2-6-4-4 5-.5z" fill="#e08420" /></svg>
    ),
  },
  { title: 'EDS工程系统', icon: <LetterIcon letter="F" /> },
  {
    title: 'Administrat...',
    icon: (
      <svg width="24" height="24" className="shrink-0"><rect x="1" width="22" height="23" rx="1" fill="#2848c8" /><path d="M7 0h11v8H7z" fill="#b8c0d0" /><path d="M14 1h3v6h-3z" fill="#2848c8" /><path d="M4 11h16v12H4z" fill="#fff" /><path d="M5 14h14M5 17h14M5 20h8" stroke="#e07078" /></svg>
    ),
  },
  {
    title: 'Microsoft E...',
    icon: (
      <svg width="24" height="24" className="shrink-0"><path d="M5 1l17 2v19l-17 1z" fill="#e8f4e0" /><path d="M13 7h8M13 11h8M13 15h8M13 19h8M17 5v16" stroke="#6aa850" /><path d="M3 2l11 1v17L1 21z" fill="#a8d490" /><path d="M4 7l7 9M11 7l-7 9" stroke="#2c6a2c" strokeWidth="2.500" /></svg>
    ),
  },
  {
    title: 'Genesis',
    icon: (
      <svg width="24" height="24" className="shrink-0"><path d="M1 3h7l5 5-5 2-7-3z" fill="#1c98a0" /><ellipse cx="14" cy="13" rx="9" ry="8" fill="#147888" /><ellipse cx="14" cy="12" rx="6" ry="5" fill="#28b8a8" /><ellipse cx="14" cy="12" rx="2.500" ry="2" fill="#d8e060" /><path d="M3 18q5 4 11 3" stroke="#20a0c8" fill="none" /></svg>
    ),
  },
  { title: 'Engineering...', icon: <XIcon size={22} /> },
  { title: 'Progress', icon: <XIcon size={22} /> },
  { title: 'Graphic Edit...', icon: <XIcon size={22} /> },
  { title: 'Drill Tool M...', icon: <XIcon size={22} />, active: true },
];

function TaskBar() {
  return (
    <footer className={`flex h-10 shrink-0 items-stretch bg-linear-to-r from-[#3c4047] from-75% to-[#1c2c32] to-85% text-xs text-white ${UI}`}>
      <div className="flex w-[205px] items-center">
        <button aria-label="Start" className="flex w-12 justify-center">
          <svg width="16" height="16" fill="#fff"><path d="M0 2.500l7-1v6H0zM8 1.300L16 0v7.500H8zM0 8.500h7v6l-7-1zM8 8.500h8V16l-8-1.300z" /></svg>
        </button>
        <button aria-label="Search" className="flex w-[52px] justify-center">
          <svg width="21" height="20" fill="none" stroke="#fff" strokeWidth="1.500"><circle cx="9.500" cy="9" r="8" /><path d="M14 15l5 4" strokeWidth="2" /><path d="M8 6a3.500 3.500 0 1 0 5 4" /><circle cx="10.500" cy="7" r="1" /></svg>
        </button>
        <button aria-label="Favorites" className="flex w-[52px] justify-center">
          <svg width="24" height="24"><rect width="24" height="24" rx="1" fill="#f98b22" /><path d="M12 5l2.200 4.800 5.300.6-4 3.500 1.200 5.100-4.700-2.600L7.300 19l1.200-5.100-4-3.500 5.300-.6z" fill="#fff" /></svg>
        </button>
        <button aria-label="File Explorer" className="flex w-[50px] justify-center">
          <svg width="22" height="20"><path d="M0 1h8l2 2h11v15H0z" fill="#e8b040" /><path d="M0 5h22v13H0z" fill="#fad870" /><path d="M4 19v-8h14v8h-4v-4H8v4z" fill="#3c94d8" /></svg>
        </button>
      </div>
      <nav className="flex gap-[9px]">
        {tasks.map((task) => (
          <button
            key={task.title}
            className={`flex w-[116px] items-center gap-1 overflow-hidden whitespace-pre border-b-2 border-[#76b9ed] ${task.active ? '-ml-1 w-[124px] bg-[#666c74] pl-2' : 'pl-1.5'}`}
          >
            {task.icon}
            <span>{task.title}</span>
          </button>
        ))}
      </nav>
      <div className="flex flex-1 items-center gap-[9px] pl-2">
        <svg width="14" height="8" fill="none" stroke="#fff" strokeWidth="1.500"><path d="M1 7l6-6 6 6" /></svg>
        <svg width="16" height="14"><path d="M8 0L0 13h4z" fill="#f01818" /><path d="M8 0l8 13h-5L8 6z" fill="#107838" /><path d="M8 6l3 7H6z" fill="#30e830" /></svg>
        <svg width="14" height="17"><rect width="14" height="17" rx="3" fill="#1c88e8" /><path d="M4 3l6 5v5l-3-3-3-2z" fill="#fff" /></svg>
        <Volume2 className="size-4" strokeWidth={1.500} />
        <svg width="16" height="16"><circle cx="8" cy="8" r="8" fill="#e8d010" /><circle cx="8" cy="8" r="5.500" fill="#38a838" /><path d="M8 4v8M4 8h8" stroke="#fff" strokeWidth="2" /></svg>
        <span className="text-sm">英</span>
        <span className="pl-1">
          <SogouLogo size={18} />
        </span>
        <div className="pl-1.5 text-center leading-[22px]">
          <div className="leading-[17px]">18:29 周一</div>
          <div className="leading-[17px]">2024/1/15</div>
        </div>
        <svg width="16" height="15" fill="none" stroke="#fff" className="ml-2.5"><path d="M.5.500h15v13H.5z" /><path d="M6 4v6l4-3z" fill="#fff" stroke="none" /></svg>
        <div className="relative ml-4">
          <svg width="17" height="17"><path d="M0 0h16v12H6l-3 4v-4H0z" fill="#fff" /><path d="M3 3.500h10M3 6.500h10" stroke="#26343a" /></svg>
          <span className="absolute -bottom-2 left-2 flex size-4 items-center justify-center rounded-full border border-[#888] bg-[#2c3438] text-xs font-bold">1</span>
        </div>
        <div className="ml-auto h-full border-l border-[#5a686c] pl-0.5" />
      </div>
    </footer>
  );
}

export default function App() {
  return (
    <div className="relative flex h-screen flex-col overflow-hidden bg-black text-black">
      <div className={`flex h-[23px] shrink-0 items-center bg-white pb-px pl-0.5 text-xs text-[#999] ${UI}`}>
        <XIcon />
        <h1 className="flex-1 pl-[5px]">Graphic Editor 9.07b2 (00@HY-HYCAM-PC531 - Windows, pid:1980)</h1>
        <WindowControls color="#999" restore />
      </div>
      <MenuBar />
      <div className="flex min-h-0 flex-1">
        <LayerPanel />
        <BoardView />
        <ToolPanel />
      </div>
      <PromptBar />
      <div className="relative h-[30px] shrink-0 bg-[#d8ffff] pb-1">
        <div className="h-full border-b-2 border-t-[3px] border-b-[#5f9c9c] border-t-[#dcffff] bg-[#b4fffd]" />
        <div className="mt-0.5 border-b border-black" />
        <InputMethodBar />
        <div className="absolute -top-12 left-1 flex h-[62px] w-1.5 flex-col justify-end overflow-hidden rounded-full bg-black/40">
          <div className="h-6 bg-[#40d860]" />
        </div>
      </div>
      <TaskBar />
      <DrillToolManager />
    </div>
  );
}
